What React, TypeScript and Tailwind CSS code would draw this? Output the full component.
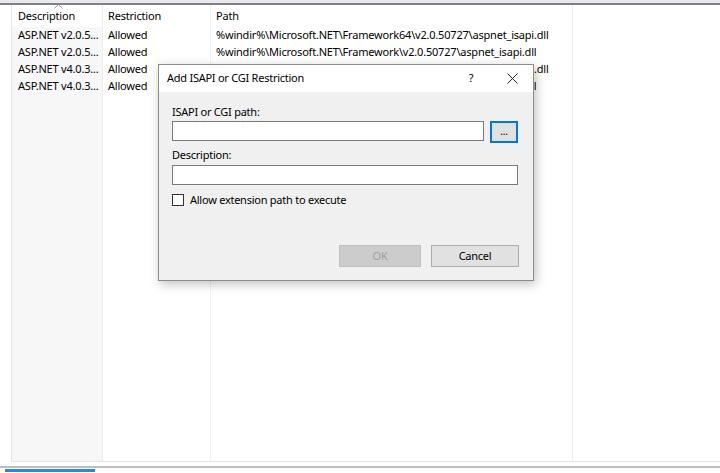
import React from "react";

const rows = [
  { desc: "ASP.NET v2.0.5...", restriction: "Allowed", path: "%windir%\\Microsoft.NET\\Framework64\\v2.0.50727\\aspnet_isapi.dll" },
  { desc: "ASP.NET v2.0.5...", restriction: "Allowed", path: "%windir%\\Microsoft.NET\\Framework\\v2.0.50727\\aspnet_isapi.dll" },
  { desc: "ASP.NET v4.0.3...", restriction: "Allowed", path: "%windir%\\Microsoft.NET\\Framework64\\v4.0.30319\\aspnet_isapi.dll" },
  { desc: "ASP.NET v4.0.3...", restriction: "Allowed", path: "%windir%\\Microsoft.NET\\Framework\\v4.0.30319\\aspnet_isapi.dll" },
];

function Dialog() {
  return (
    <div className="absolute left-[158px] top-[64px] flex h-[217px] w-[376px] flex-col border border-[#8c8c8c] bg-[#f0f0f0] tracking-[-0.25px] shadow-[2px_3px_10px_rgba(0,0,0,0.25)]">
      <div className="flex h-[27px] shrink-0 items-center bg-white pl-[8px] text-black">
        <span className="flex-1">Add ISAPI or CGI Restriction</span>
        <span className="w-[20px] text-center">?</span>
        <span className="ml-[24px] mr-[14px] flex w-[14px] justify-center">
          <svg width="11" height="11" viewBox="0 0 11 11">
            <path d="M0.5 0.5 L10.5 10.5 M10.5 0.5 L0.5 10.5" stroke="#222" strokeWidth="1" fill="none" />
          </svg>
        </span>
      </div>
      <div className="flex flex-1 flex-col px-[13px] pt-[12px] text-black">
        <div className="h-[16px] leading-[16px]">ISAPI or CGI path:</div>
        <div className="mt-[1px] flex items-start gap-[6px]">
          <div className="h-[20px] w-[312px] border border-[#7a7a7a] bg-white" />
          <div className="flex h-[22px] w-[28px] items-center justify-center border-2 border-[#0078d7] bg-[#e1e1e1] pb-[2px] text-[10px] leading-none">
            ...
          </div>
        </div>
        <div className="mt-[4px] h-[16px] leading-[16px]">Description:</div>
        <div className="mt-[2px] h-[20px] w-[346px] border border-[#7a7a7a] bg-white" />
        <div className="mt-[7px] flex h-[16px] items-center gap-[6px]">
          <div className="h-[12px] w-[12px] border border-[#333] bg-white" />
          <span className="leading-[16px]">Allow extension path to execute</span>
        </div>
        <div className="mt-[37px] flex justify-end gap-[10px] pr-[1px]">
          <div className="flex h-[22px] w-[82px] items-center justify-center border border-[#bfbfbf] bg-[#cccccc] text-[#a0a0a0]">
            OK
          </div>
          <div className="flex h-[22px] w-[88px] items-center justify-center border border-[#adadad] bg-[#e1e1e1]">
            Cancel
          </div>
        </div>
      </div>
    </div>
  );
}

export default function App() {
  return (
    <div
      className="relative h-[473px] w-[720px] overflow-hidden bg-white text-[11px] text-black"
      style={{ fontFamily: "'Noto Sans', 'Open Sans', sans-serif" }}
    >
      <div className="h-[3px] bg-[#e9e9ec]" />
      <div className="h-[2px] bg-[#80808c]" />
      <div className="relative ml-[11px] flex h-[457px] border-b border-l border-[#e3e3e3] tracking-[-0.2px]">
        <svg className="absolute left-[42px] top-[-1px]" width="9" height="5" viewBox="0 0 9 5">
          <path d="M0.5 4.5 L4.5 0.5 L8.5 4.5" stroke="#9a9a9a" strokeWidth="1" fill="none" />
        </svg>
        <div className="flex w-[91px] flex-col border-r border-[#ececec]">
          <div className="flex h-[22px] shrink-0 items-center bg-white pl-[6px]">Description</div>
          <div className="flex-1 bg-[#f7f7f7]">
            {rows.map((r, i) => (
              <div key={i} className="flex h-[17px] items-center whitespace-nowrap pl-[6px]">{r.desc}</div>
            ))}
          </div>
        </div>
        <div className="flex w-[108px] flex-col border-r border-[#eef1f5]">
          <div className="flex h-[22px] shrink-0 items-center pl-[5px]">Restriction</div>
          {rows.map((r, i) => (
            <div key={i} className="flex h-[17px] items-center pl-[5px]">{r.restriction}</div>
          ))}
        </div>
        <div className="flex w-[362px] flex-col border-r border-[#e6f0fa]">
          <div className="flex h-[22px] shrink-0 items-center pl-[5px]">Path</div>
          {rows.map((r, i) => (
            <div key={i} className="flex h-[17px] items-center whitespace-nowrap pl-[5px]">{r.path}</div>
          ))}
        </div>
        <div className="flex-1" />
      </div>
      <div className="mt-[4px] h-[2px] bg-[#bdbdbd]" />
      <div className="ml-[5px] mt-[1px] h-[3px] w-[90px] bg-[#2b88d8]" />
      <Dialog />
    </div>
  );
}
